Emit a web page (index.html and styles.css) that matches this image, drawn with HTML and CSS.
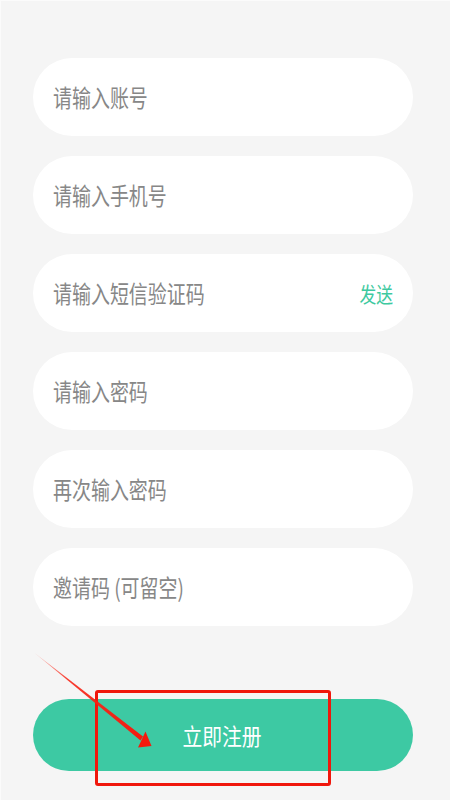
FILE: index.html
```html
<!DOCTYPE html>
<html lang="zh">
<head>
<meta charset="utf-8">
<title>注册</title>
<link rel="stylesheet" href="styles.css">
</head>
<body>
<div class="page">
  <form class="form">
    <div class="field"><span class="placeholder">请输入账号</span></div>
    <div class="field"><span class="placeholder">请输入手机号</span></div>
    <div class="field"><span class="placeholder">请输入短信验证码</span><span class="send">发送</span></div>
    <div class="field"><span class="placeholder">请输入密码</span></div>
    <div class="field"><span class="placeholder">再次输入密码</span></div>
    <div class="field"><span class="placeholder">邀请码 (可留空)</span></div>
  </form>
  <div class="submit"><span class="submit-label">立即注册</span></div>
  <div class="highlight"></div>
  <svg class="arrow" width="450" height="800" viewBox="0 0 450 800">
    <defs>
      <linearGradient id="fade" x1="33" y1="652" x2="145" y2="740" gradientUnits="userSpaceOnUse">
        <stop offset="0" stop-color="#ff3a2a" stop-opacity="0.2"/>
        <stop offset="0.3" stop-color="#f8281a" stop-opacity="0.9"/>
        <stop offset="1" stop-color="#f5190d"/>
      </linearGradient>
    </defs>
    <polygon points="33,651.5 142,735.5 139.5,739.5" fill="url(#fade)"/>
    <polygon points="137,746.5 150.5,745 144.5,730.5 141,738" fill="#f5190d"/>
  </svg>
</div>
</body>
</html>
```
FILE: styles.css
```css
* { box-sizing: border-box; }
html, body {
  margin: 0;
  padding: 0;
  background: #f5f5f5;
}
body {
  font-family: "Noto Sans CJK SC", "Noto Sans", sans-serif;
}
.page {
  position: relative;
  width: 450px;
  height: 800px;
  padding: 58px 37px 0 33px;
  border-top: 1px solid #fbfbfb;
  border-left: 1px solid #fbfbfb;
  overflow: hidden;
}
.form {
  display: flex;
  flex-direction: column;
  gap: 20px;
  margin: -1px 0 0 -1px;
}
.field {
  height: 78px;
  background: #ffffff;
  border-radius: 39px;
  display: flex;
  align-items: center;
  justify-content: space-between;
  padding: 0 20px 0 20px;
}
.placeholder {
  display: inline-block;
  font-size: 24px;
  line-height: 1;
  color: #878787;
  transform: scaleX(0.79);
  transform-origin: left center;
  white-space: nowrap;
}
.send {
  display: inline-block;
  font-size: 21px;
  line-height: 1;
  color: #3ec9a0;
  transform: scaleX(0.8);
  transform-origin: right center;
}
.submit {
  margin: 73px 0 0 -1px;
  height: 72px;
  border-radius: 36px;
  background: #3dc9a3;
  display: flex;
  align-items: center;
  justify-content: center;
}
.submit-label {
  display: inline-block;
  color: #ffffff;
  font-size: 23px;
  line-height: 1;
  transform: scaleX(0.86);
  transform-origin: center;
  margin-left: -3px;
}
.highlight {
  position: absolute;
  left: 94px;
  top: 689px;
  width: 236px;
  height: 96px;
  border: 3px solid #f0170c;
  border-radius: 3px;
}
.arrow {
  position: absolute;
  left: 0;
  top: 0;
}
```
